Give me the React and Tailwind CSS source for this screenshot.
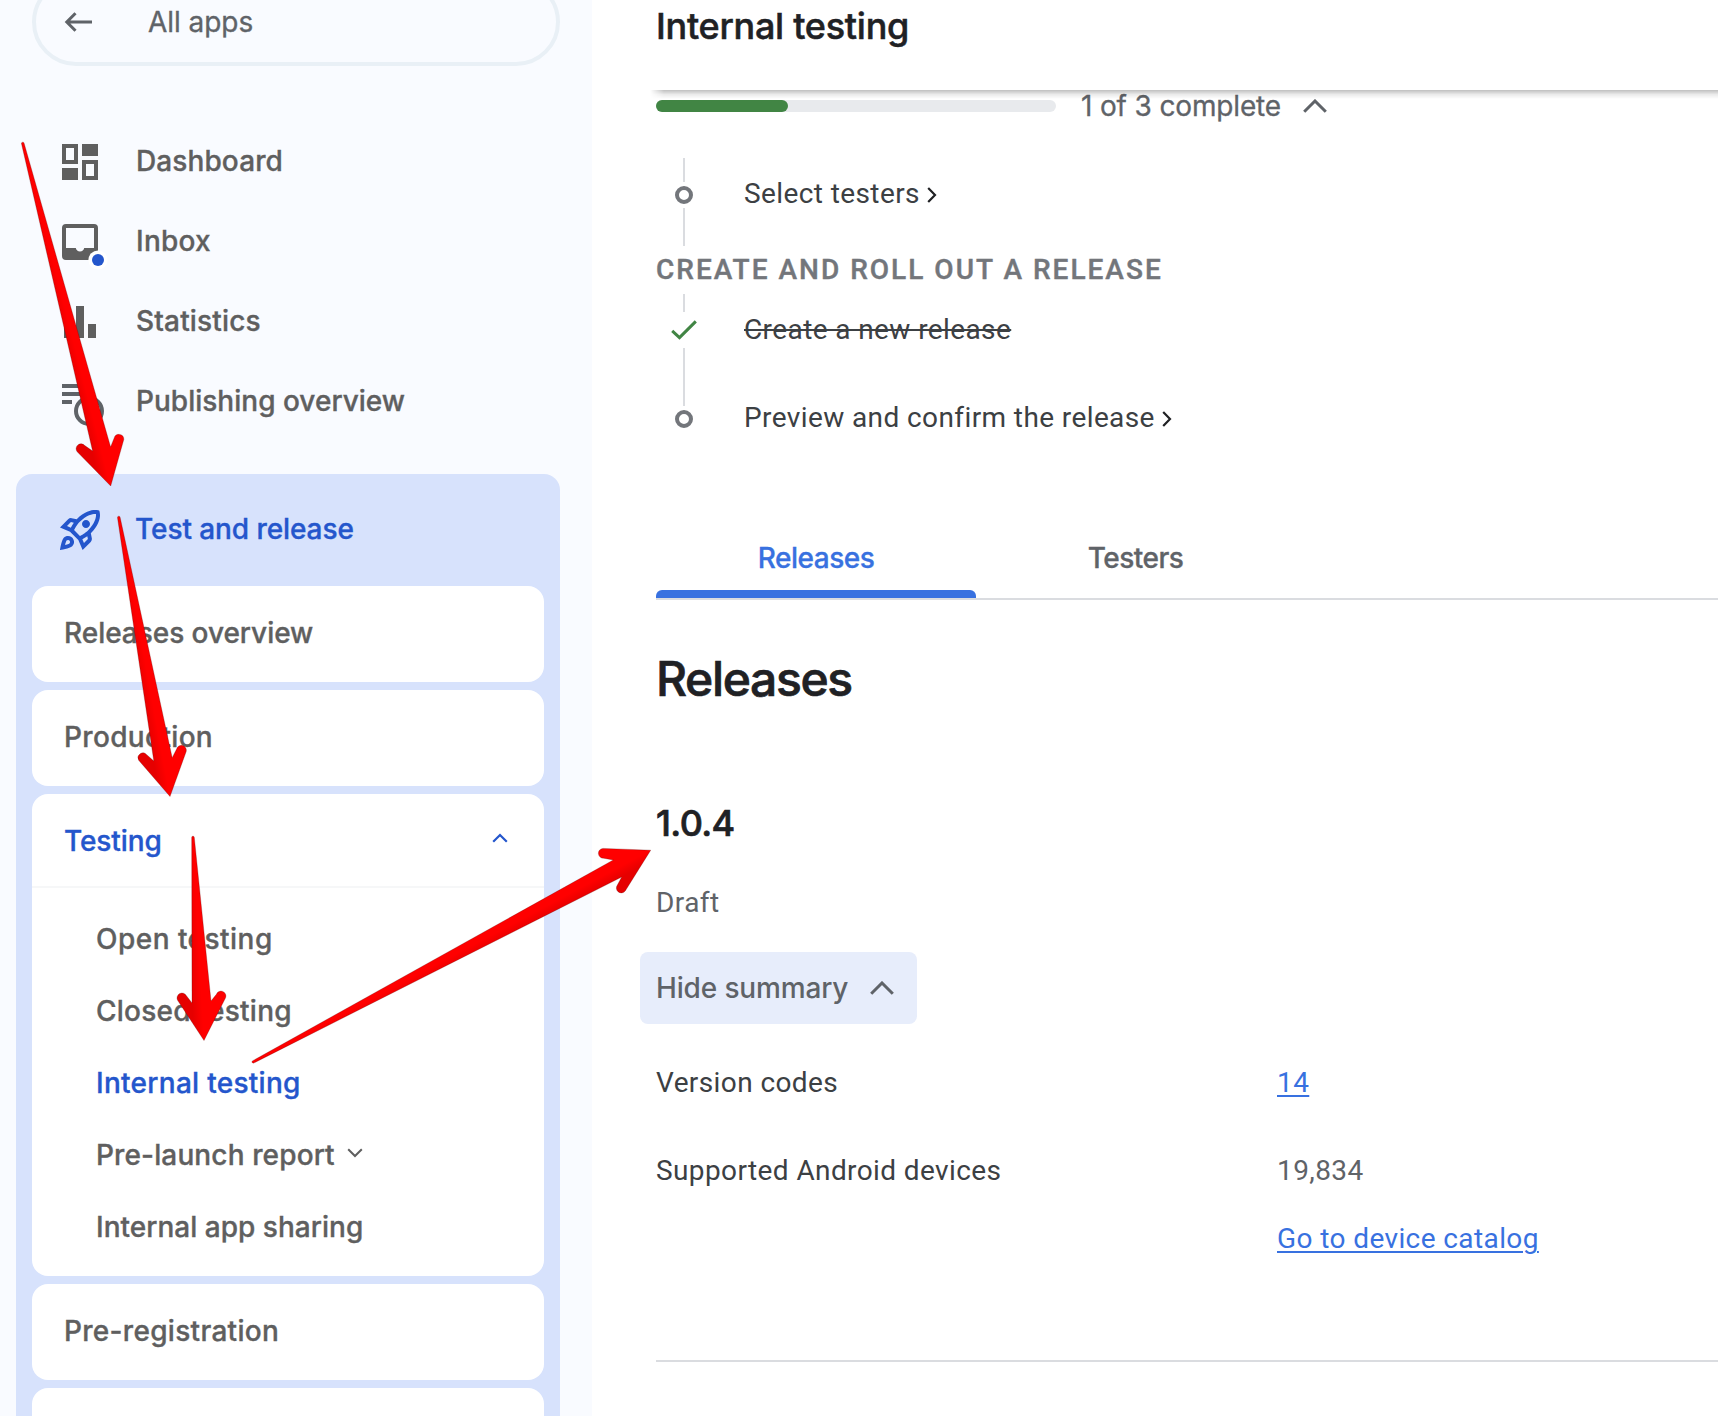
import React from "react";
import { MdOutlineRocketLaunch } from "react-icons/md";

/* ---------- icons ---------- */

function BackArrow() {
  return (
    <svg width="30" height="24" viewBox="0 0 30 24" fill="none" stroke="#5f6368" strokeWidth="3">
      <path d="M28 12H3.5M11.5 3.2L2.8 12l8.7 8.8" />
    </svg>
  );
}

function DashboardIcon() {
  return (
    <svg width="48" height="48" viewBox="0 0 24 24" fill="#5f5f5f">
      <path fillRule="evenodd" d="M3 3h8v10H3zM5 5v6h4V5zM13 3h8v6h-8zM3 15h8v6H3zM13 11h8v10h-8zM15 13v6h4v-6z" />
    </svg>
  );
}

function InboxIcon() {
  return (
    <svg width="48" height="48" viewBox="0 0 24 24" className="overflow-visible">
      <path
        fill="#5f5f5f"
        fillRule="evenodd"
        d="M5 3h14a2 2 0 0 1 2 2v14a2 2 0 0 1-2 2H5a2 2 0 0 1-2-2V5a2 2 0 0 1 2-2zM5 5v10h4.900a2.150 2.150 0 0 0 4.200 0H19V5z"
      />
      <circle cx="21" cy="21" r="4.8" fill="#ffffff" />
      <circle cx="21" cy="21" r="3" fill="#2456cc" />
    </svg>
  );
}

function StatisticsIcon() {
  return (
    <svg width="48" height="48" viewBox="0 0 24 24" fill="#5f5f5f">
      <path d="M4 9h4v11H4zM10 4h4v16h-4zM16 13h4v7h-4z" />
    </svg>
  );
}

function PublishingIcon() {
  return (
    <svg width="48" height="48" viewBox="0 0 48 48" className="overflow-visible" fill="none" stroke="#5f6368" strokeWidth="4">
      <path d="M6 8h26M6 16h20M6 24h10" />
      <circle cx="33" cy="33" r="13" />
      <path d="M33 26v8l5 4" strokeWidth="3" />
    </svg>
  );
}

function Chevron({ w, h, stroke, sw, dir = "up" }) {
  const d = {
    up: `M1.2 ${h - 1.2}L${w / 2} 2L${w - 1.2} ${h - 1.2}`,
    down: `M1.2 1.2L${w / 2} ${h - 2}L${w - 1.2} 1.2`,
    right: `M1.200 1L${w - 2} ${h / 2}L1.200 ${h - 1}`,
  }[dir];
  return (
    <svg className="shrink-0" width={w} height={h} viewBox={`0 0 ${w} ${h}`} fill="none" stroke={stroke} strokeWidth={sw}>
      <path d={d} />
    </svg>
  );
}

/* ---------- sidebar ---------- */

const NAV = [
  { label: "Dashboard", icon: <DashboardIcon />, track: "tracking-[0.1px]" },
  { label: "Inbox", icon: <InboxIcon />, track: "tracking-[0.25px]" },
  { label: "Statistics", icon: <StatisticsIcon />, track: "tracking-[0.17px]" },
  { label: "Publishing overview", icon: <PublishingIcon />, track: "tracking-[0.01px]" },
];

const TESTING = [
  { label: "Open testing", track: "tracking-[0.47px]" },
  { label: "Closed testing", track: "tracking-[0.25px]" },
  { label: "Internal testing", track: "tracking-[0.28px]", active: true },
  { label: "Pre-launch report", track: "tracking-[0.13px]", more: true },
  { label: "Internal app sharing", track: "tracking-[0.02px]" },
];

function Card({ children }) {
  return <div className="flex h-24 shrink-0 items-center rounded-[16px] bg-white px-8 pb-[2px]">{children}</div>;
}

function Sidebar() {
  return (
    <aside className="flex w-[592px] shrink-0 flex-col overflow-hidden bg-[#f9fbff] pl-4 pr-8 font-['Inter',sans-serif] text-[28px] font-medium text-[#5f5f5f] [-webkit-text-stroke:0.35px_currentColor]">
      <a className="-mt-[22px] ml-4 flex h-[88px] shrink-0 items-center rounded-full border-4 border-[#e9f0f6] pl-[28px]">
        <BackArrow />
        <span className="ml-[54px] pb-px font-normal tracking-[-0.05px] text-[#5f6368]">All apps</span>
      </a>

      <nav className="mt-14 flex shrink-0 flex-col">
        {NAV.map((n) => (
          <a key={n.label} className="flex h-20 items-center pl-10">
            {n.icon}
            <span className={`ml-8 pb-[2px] ${n.track}`}>{n.label}</span>
          </a>
        ))}
      </nav>

      <section className="mt-8 flex shrink-0 flex-col gap-2 rounded-[16px] bg-[#d7e2fc] px-4">
        <div className="flex h-[104px] items-center pl-6 pt-2 text-[#2456cc]">
          <MdOutlineRocketLaunch size={48} />
          <span className="ml-[31px] pb-[2px] tracking-[-0.08px]">Test and release</span>
        </div>
        <Card>
          <span className="tracking-[-0.04px]">Releases overview</span>
        </Card>
        <Card>
          <span className="tracking-[0.32px]">Production</span>
        </Card>
        <div className="h-[482px] shrink-0 rounded-[16px] bg-white">
          <div className="flex h-[94px] items-center justify-between border-b-2 border-[#f6f7f8] pl-8 pr-9 text-[#2456cc]">
            <span className="pt-[1px] tracking-[-0.1px]">Testing</span>
            <span className="pb-1">
              <Chevron w={16} h={10} stroke="#2456cc" sw={2.2} />
            </span>
          </div>
          <div className="pt-4">
            {TESTING.map((t) => (
              <a key={t.label} className={`flex h-[72px] items-center pl-16 pb-[2px] ${t.active ? "text-[#2456cc]" : ""}`}>
                <span className={t.track}>{t.label}</span>
                {t.more && (
                  <span className="mb-1 ml-[12px]">
                    <Chevron w={16} h={10} stroke="#5f5f5f" sw={2} dir="down" />
                  </span>
                )}
              </a>
            ))}
          </div>
        </div>
        <Card>
          <span className="tracking-[0.3px]">Pre-registration</span>
        </Card>
        <Card />
      </section>
    </aside>
  );
}

/* ---------- main column ---------- */

function Ring() {
  return <span className="h-[18px] w-[18px] shrink-0 rounded-full border-4 border-[#73767b]" />;
}

function Steps() {
  return (
    <div className="mt-9 text-[28px] tracking-[0.4px] text-[#3c4043]">
      <div className="flex h-[88px]">
        <div className="flex w-14 flex-col items-center gap-1">
          <span className="h-6 w-[2px] bg-[#dadce0]" />
          <Ring />
          <span className="h-[38px] w-[2px] bg-[#dadce0]" />
        </div>
        <a className="ml-8 mt-[16px] flex h-10 items-center leading-10">
          Select testers
          <span className="ml-[7px] mt-px flex">
            <Chevron w={10} h={16} stroke="#202124" sw={2.2} dir="right" />
          </span>
        </a>
      </div>
      <h3 className="h-12 font-medium leading-[48px] tracking-[2.01px] text-[#73767b] [-webkit-text-stroke:0.4px_currentColor]">
        CREATE AND ROLL OUT A RELEASE
      </h3>
      <div className="flex h-[112px]">
        <div className="flex w-14 flex-col items-center">
          <span className="h-[18px] w-[2px] bg-[#dadce0]" />
          <span className="flex h-9 items-center">
            <svg width="26" height="20" viewBox="0 0 26 20" fill="none" stroke="#418544" strokeWidth="3">
              <path d="M1.200 10.800L8.500 17.600L24.800 1.400" />
            </svg>
          </span>
          <span className="h-[58px] w-[2px] bg-[#dadce0]" />
        </div>
        <span className="ml-8 mt-[16px] leading-10 line-through decoration-2">Create a new release</span>
      </div>
      <div className="flex h-6">
        <div className="flex w-14 justify-center pt-1">
          <Ring />
        </div>
        <a className="ml-8 flex h-6 items-center leading-6">
          Preview and confirm the release
          <span className="ml-[7px] mt-[2px] flex">
            <Chevron w={10} h={16} stroke="#202124" sw={2.2} dir="right" />
          </span>
        </a>
      </div>
    </div>
  );
}

function Main() {
  return (
    <main className="flex min-w-0 flex-1 flex-col bg-white pl-16 font-['Roboto',sans-serif]">
      <header className="relative z-10 h-[90px] shrink-0 bg-white pt-[2px]">
        <h1 className="font-['Inter',sans-serif] text-[36px] font-medium leading-[49px] tracking-[-0.27px] text-[#202124] [-webkit-text-stroke:0.5px_currentColor]">
          Internal testing
        </h1>
        <div className="absolute -left-[6px] right-0 top-full h-[9px] bg-linear-to-b from-black/25 via-black/8 to-transparent [mask-image:linear-gradient(to_right,transparent,black_14px)]" />
      </header>

      <div className="flex h-8 shrink-0 items-center font-['Inter',sans-serif] text-[28px] text-[#5f6368]">
        <div className="h-3 w-[400px] rounded-full bg-[#e8eaed]">
          <div className="h-3 w-[132px] rounded-full bg-[#418544]" />
        </div>
        <span className="ml-[25px] leading-8 tracking-[-0.15px] [-webkit-text-stroke:0.3px_currentColor]">1 of 3 complete</span>
        <span className="ml-[22px]">
          <Chevron w={24} h={14} stroke="#5f6368" sw={3} />
        </span>
      </div>

      <Steps />

      <div className="mt-[108px] flex shrink-0 border-b-2 border-[#dadce0] text-center font-['Inter',sans-serif] text-[28px] font-medium leading-10 [-webkit-text-stroke:0.3px_currentColor]">
        <div className="w-[320px] text-[#3871e0]">
          <span className="tracking-[-0.48px]">Releases</span>
          <div className="mt-3 h-2 rounded-t-[6px] bg-[#3871e0]" />
        </div>
        <div className="w-[320px] pr-px text-[#5f6368]">
          <span className="tracking-[-0.5px]">Testers</span>
        </div>
      </div>

      <h2 className="mt-[51px] font-['Inter',sans-serif] text-[48px] font-medium leading-[56px] tracking-[-1.35px] text-[#202124] [-webkit-text-stroke:0.7px_currentColor]">
        Releases
      </h2>
      <h3 className="mt-[96px] font-['Inter',sans-serif] text-[36px] font-medium leading-10 tracking-[-0.62px] text-[#202124] [-webkit-text-stroke:0.7px_currentColor]">
        1.0.4
      </h3>
      <p className="mt-10 text-[28px] leading-10 tracking-[0.42px] text-[#5f6368]">Draft</p>

      <button className="-ml-4 mt-[29px] flex h-[72px] w-[277px] shrink-0 items-center rounded-[8px] bg-[#e7edfb] pb-px pl-4 font-['Inter',sans-serif] text-[28px] font-medium text-[#5f6368]">
        <span className="tracking-[-0.15px]">Hide summary</span>
        <span className="ml-[22px]">
          <Chevron w={24} h={14} stroke="#5f6368" sw={3} />
        </span>
      </button>

      <dl className="mt-[39px] grid h-[299px] shrink-0 grid-cols-[621px_1fr] content-start gap-y-12 border-b-2 border-[#dadce0] text-[28px] leading-10 tracking-[0.4px] text-[#3c4043]">
        <dt>Version codes</dt>
        <dd>
          <a className="text-[#3871e0] underline decoration-2 underline-offset-[3px]">14</a>
        </dd>
        <dt>Supported Android devices</dt>
        <dd className="text-[#5f6368]">
          19,834
          <div className="mt-7">
            <a className="text-[#3871e0] underline decoration-2 underline-offset-[3px]">Go to device catalog</a>
          </div>
        </dd>
      </dl>
    </main>
  );
}

/* ---------- red annotation arrows ---------- */

const ARROWS = [
  { tail: [22.8, 143.5], body: [[92.6, 451], [110.6, 447]], barbs: [[81, 448.7], [119, 438.7]], tip: [110.7, 486] },
  { tail: [118.8, 517.5], body: [[153.8, 761], [172.2, 757.7]], barbs: [[142.7, 757.5], [181.4, 750.3]], tip: [170, 796.5] },
  { tail: [193, 837.5], body: [[192, 1003], [211, 1001]], barbs: [[182, 998], [221, 996]], tip: [204, 1040.5] },
  { tail: [253, 1062], body: [[621.7, 877], [613.3, 860]], barbs: [[621.3, 888], [603.3, 853.3]], tip: [650.7, 850.2] },
];

function Arrow({ tail, body, barbs, tip, id }) {
  const dx = tip[0] - tail[0];
  const dy = tip[1] - tail[1];
  const len = Math.hypot(dx, dy);
  /* unit normal pointing to the shaded side of the shaft */
  const n = [-dy / len, dx / len];
  const r = 4.9;
  const tangents = barbs.map((b, i) => {
    const bx = b[0] - tip[0];
    const by = b[1] - tip[1];
    const bl = Math.hypot(bx, by);
    const s = i === 0 ? -1 : 1;
    const m = [(s * -by) / bl, (s * bx) / bl];
    return { outer: [b[0] + m[0] * r, b[1] + m[1] * r], inner: [b[0] - m[0] * r, b[1] - m[1] * r] };
  });
  const [L, R] = tangents;
  const p = (a) => `${a[0].toFixed(1)} ${a[1].toFixed(1)}`;
  const t1 = [tail[0] + n[0] * 1.3, tail[1] + n[1] * 1.3];
  const t2 = [tail[0] - n[0] * 1.3, tail[1] - n[1] * 1.3];
  const d =
    `M${p(t1)}L${p(body[0])}L${p(L.inner)}A${r} ${r} 0 0 0 ${p(L.outer)}L${p(tip)}` +
    `L${p(R.outer)}A${r} ${r} 0 0 0 ${p(R.inner)}L${p(body[1])}L${p(t2)}A1.3 1.3 0 0 0 ${p(t1)}Z`;
  return (
    <>
      <linearGradient
        id={id}
        gradientUnits="userSpaceOnUse"
        x1={tip[0] + n[0] * 10}
        y1={tip[1] + n[1] * 10}
        x2={tip[0]}
        y2={tip[1]}
      >
        <stop offset="0" stopColor="#e60000" />
        <stop offset="1" stopColor="#ff0000" />
      </linearGradient>
      <path d={d} fill={`url(#${id})`} stroke="#5a0000" strokeOpacity="0.45" strokeWidth="0.6" />
    </>
  );
}

export default function App() {
  return (
    <div className="relative flex h-[1416px] w-[1718px] overflow-hidden bg-white">
      <Sidebar />
      <Main />
      <svg className="pointer-events-none absolute inset-0 z-20" width="1718" height="1416" viewBox="0 0 1718 1416">
        {ARROWS.map((a, i) => (
          <Arrow key={i} id={`arrow${i}`} {...a} />
        ))}
      </svg>
    </div>
  );
}
